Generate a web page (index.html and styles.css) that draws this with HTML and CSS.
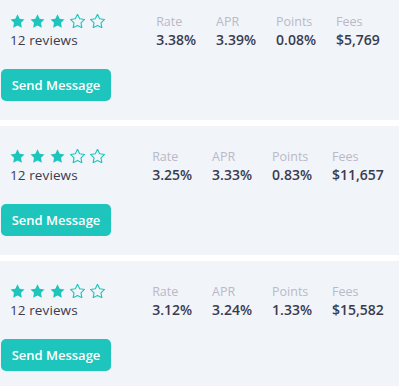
FILE: index.html
```html
<!DOCTYPE html>
<html lang="en">
<head>
  <meta charset="UTF-8" />
  <meta name="viewport" content="width=device-width, initial-scale=1.0"/>
  <title>Offers</title>
  <link rel="stylesheet" href="styles.css">
</head>
<body>
  <svg width="0" height="0" class="defs">
    <defs>
      <path id="star" d="M12 2l3.09 6.26L22 9.27l-5 4.87 1.18 6.88L12 17.77l-6.18 3.25L7 14.14 2 9.27l6.91-1.01L12 2z"/>
    </defs>
  </svg>

  <div class="offer-list">
    <div class="offer">
      <div class="lender">
        <div class="stars">
          <svg viewBox="1.5 1.5 21 20" class="star"><use href="#star"/></svg>
          <svg viewBox="1.5 1.5 21 20" class="star"><use href="#star"/></svg>
          <svg viewBox="1.5 1.5 21 20" class="star"><use href="#star"/></svg>
          <svg viewBox="1.5 1.5 21 20" class="star empty"><use href="#star"/></svg>
          <svg viewBox="1.5 1.5 21 20" class="star empty"><use href="#star"/></svg>
        </div>
        <div class="reviews">12 reviews</div>
      </div>
      <div class="stats">
        <div class="stat"><span class="label">Rate</span><span class="value">3.38%</span></div>
        <div class="stat"><span class="label">APR</span><span class="value">3.39%</span></div>
        <div class="stat"><span class="label">Points</span><span class="value">0.08%</span></div>
        <div class="stat"><span class="label">Fees</span><span class="value">$5,769</span></div>
      </div>
      <button class="btn-send">Send Message</button>
    </div>

    <div class="offer">
      <div class="lender">
        <div class="stars">
          <svg viewBox="1.5 1.5 21 20" class="star"><use href="#star"/></svg>
          <svg viewBox="1.5 1.5 21 20" class="star"><use href="#star"/></svg>
          <svg viewBox="1.5 1.5 21 20" class="star"><use href="#star"/></svg>
          <svg viewBox="1.5 1.5 21 20" class="star empty"><use href="#star"/></svg>
          <svg viewBox="1.5 1.5 21 20" class="star empty"><use href="#star"/></svg>
        </div>
        <div class="reviews">12 reviews</div>
      </div>
      <div class="stats">
        <div class="stat"><span class="label">Rate</span><span class="value">3.25%</span></div>
        <div class="stat"><span class="label">APR</span><span class="value">3.33%</span></div>
        <div class="stat"><span class="label">Points</span><span class="value">0.83%</span></div>
        <div class="stat"><span class="label">Fees</span><span class="value">$11,657</span></div>
      </div>
      <button class="btn-send">Send Message</button>
    </div>

    <div class="offer">
      <div class="lender">
        <div class="stars">
          <svg viewBox="1.5 1.5 21 20" class="star"><use href="#star"/></svg>
          <svg viewBox="1.5 1.5 21 20" class="star"><use href="#star"/></svg>
          <svg viewBox="1.5 1.5 21 20" class="star"><use href="#star"/></svg>
          <svg viewBox="1.5 1.5 21 20" class="star empty"><use href="#star"/></svg>
          <svg viewBox="1.5 1.5 21 20" class="star empty"><use href="#star"/></svg>
        </div>
        <div class="reviews">12 reviews</div>
      </div>
      <div class="stats">
        <div class="stat"><span class="label">Rate</span><span class="value">3.12%</span></div>
        <div class="stat"><span class="label">APR</span><span class="value">3.24%</span></div>
        <div class="stat"><span class="label">Points</span><span class="value">1.33%</span></div>
        <div class="stat"><span class="label">Fees</span><span class="value">$15,582</span></div>
      </div>
      <button class="btn-send">Send Message</button>
    </div>
  </div>
</body>
</html>
```

FILE: styles.css
```css
* {
  margin: 0;
  padding: 0;
  box-sizing: border-box;
  font-family: "Open Sans", Arial, sans-serif;
}

body {
  background-color: white;
  color: #3b3b4f;
}

.defs {
  position: absolute;
}

.offer-list {
  margin-top: -9px;
}

.offer {
  display: grid;
  grid-template-columns: 136px 1fr;
  background-color: #f1f4f8;
  padding: 23px 0 19px 1px;
  margin-bottom: 6px;
}

.lender {
  padding-left: 9px;
}

.stars {
  display: flex;
  gap: 5px;
  height: 17px;
}

.star {
  width: 15px;
  height: 14px;
  fill: #1dc5bc;
}

.star.empty {
  fill: none;
  stroke: #1dc5bc;
  stroke-width: 1.6;
  stroke-linejoin: round;
}

.reviews {
  font-size: 13.5px;
  line-height: 18px;
  letter-spacing: 0.1px;
}

.stats {
  display: flex;
  justify-content: center;
  gap: 20px;
}

.stat {
  display: flex;
  flex-direction: column;
}

.label {
  font-size: 12.5px;
  line-height: 16px;
  color: #b9b9c9;
  font-weight: 500;
}

.value {
  font-size: 14px;
  line-height: 19px;
  font-weight: 600;
}

.btn-send {
  grid-column: 1 / 3;
  justify-self: start;
  margin-top: 20px;
  width: 110px;
  height: 32px;
  background-color: #1dc5bc;
  color: white;
  border: none;
  border-radius: 5px;
  font-size: 13px;
  font-weight: 600;
  cursor: pointer;
}
```
